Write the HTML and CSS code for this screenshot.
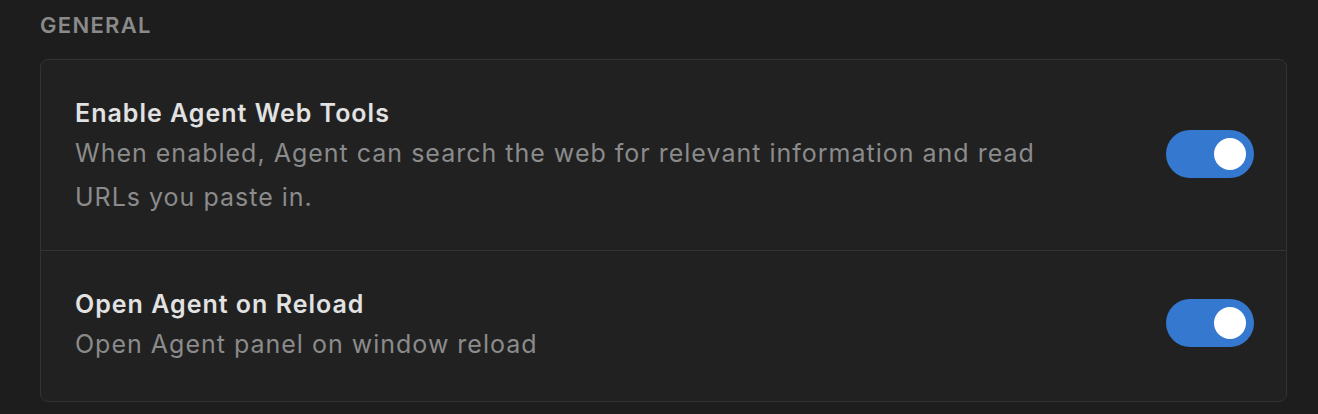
FILE: index.html
```html
<!DOCTYPE html>
<html lang="en">
<head>
<meta charset="utf-8">
<title>Settings</title>
<link rel="stylesheet" href="styles.css">
</head>
<body>
<div class="page">
  <h2 class="section-title">GENERAL</h2>
  <div class="card">
    <div class="row row-first">
      <div class="text">
        <div class="title">Enable Agent Web Tools</div>
        <div class="desc">When enabled, Agent can search the web for relevant information and read URLs you paste in.</div>
      </div>
      <div class="toggle on"><span class="knob"></span></div>
    </div>
    <div class="row">
      <div class="text">
        <div class="title">Open Agent on Reload</div>
        <div class="desc">Open Agent panel on window reload</div>
      </div>
      <div class="toggle on"><span class="knob"></span></div>
    </div>
  </div>
</div>
</body>
</html>
```
FILE: styles.css
```css
html, body {
  margin: 0;
  padding: 0;
  background: #1d1d1d;
}
body {
  font-family: Inter, "Noto Sans", "Liberation Sans", sans-serif;
  width: 1318px;
  height: 414px;
  overflow: hidden;
}
.page {
  padding: 11px 31px 0 40px;
}
.section-title {
  margin: 0 0 20px 0;
  font-size: 22px;
  line-height: 28px;
  font-weight: 600;
  letter-spacing: 1.3px;
  color: #8a8a8a;
}
.card {
  background: #212121;
  border: 1px solid #333333;
  border-radius: 8px;
}
.row {
  display: flex;
  align-items: center;
  justify-content: space-between;
  padding: 35px 32px 35px 34px;
}
.row-first {
  padding-bottom: 31px;
  border-bottom: 1px solid #333333;
}
.text {
  max-width: 1000px;
}
.title {
  font-size: 25px;
  line-height: 36px;
  font-weight: 600;
  letter-spacing: 1px;
  color: #e2e2e2;
}
.desc {
  font-size: 25px;
  line-height: 44px;
  font-weight: 400;
  letter-spacing: 1px;
  color: #8b8b8b;
}
.toggle {
  flex: none;
  width: 88px;
  height: 48px;
  margin-bottom: 6px;
  border-radius: 24px;
  background: #3a3a3a;
  display: flex;
  align-items: center;
  justify-content: flex-start;
  padding: 0 8px;
  box-sizing: border-box;
}
.toggle.on {
  background: #3478d0;
  justify-content: flex-end;
}
.knob {
  width: 32px;
  height: 32px;
  border-radius: 50%;
  background: #ffffff;
}
```
